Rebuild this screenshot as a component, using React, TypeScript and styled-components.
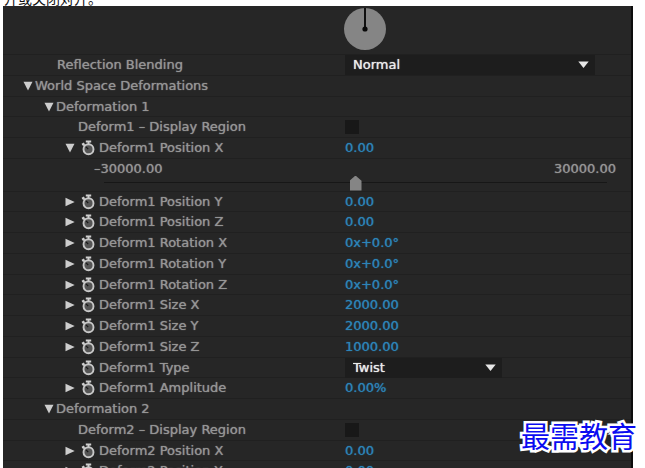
import React, { useState } from "react";
import styled, { createGlobalStyle } from "styled-components";

const GlobalStyle = createGlobalStyle`
  * { box-sizing: border-box; }
  html, body { margin: 0; background: #fff; }
  body { height: 100vh; overflow: hidden; }
  #root { height: 100%; }
`;

const Page = styled.main`
  display: flex;
  flex-direction: column;
  position: relative;
  height: 100vh;
  overflow: hidden;
  font: 13px/20px "DejaVu Sans", "Noto Sans CJK SC", sans-serif;
`;

const Caption = styled.p`
  display: flex;
  align-items: flex-end;
  flex: none;
  height: 6px;
  margin: 0;
  padding: 0 0 1px 4px;
  color: #111;
  font: 14px/14px "Noto Sans CJK SC", sans-serif;
  white-space: nowrap;
`;

const Panel = styled.section`
  flex: 1;
  min-height: 0;
  overflow: hidden;
  margin: 0 12px 0 3px;
  border-right: 2px solid #0c0c0c;
  background: #262626;
  color: #959595;
  text-shadow: 0 0 1px currentColor;
`;

const Row = styled.div`
  display: grid;
  grid-template-columns: 342px 1fr;
  height: 21px;
  border-bottom: 1px solid #202020;
  &:nth-child(4n) { height: 20px; }
`;

const DialRow = styled(Row)`
  height: 49px;
  align-items: start;
`;

const Dial = styled.div`
  display: flex;
  margin-left: -1px;
  padding-top: 1px;
`;

const SliderRow = styled(Row)`
  display: flex;
  flex-direction: column;
  height: 33px;
  padding: 0 15px 0 91px;
`;

const Range = styled.div`
  display: flex;
  justify-content: space-between;
`;

const Name = styled.div<{ $indent: number }>`
  display: flex;
  align-items: center;
  padding-left: ${(p) => p.$indent}px;
  white-space: nowrap;
`;

const Value = styled.div`
  display: flex;
  align-items: center;
  min-width: 0;
`;

const Twirl = styled.button`
  display: flex;
  align-items: center;
  justify-content: center;
  width: 14px;
  height: 14px;
  padding: 0;
  border: 0;
  background: none;
  color: #cdcdcd;
`;

const Watch = styled(Twirl)`
  width: 16px;
  height: 16px;
  margin: 0 3px 0 3px;
`;

const Scrub = styled.button`
  padding: 0;
  border: 0;
  background: none;
  color: #2c84b8;
  font: inherit;
  text-shadow: inherit;
`;

const Check = styled.input`
  appearance: none;
  width: 14px;
  height: 14px;
  margin: 0;
  background: #181818;
  &:checked { background: #959595; }
`;

const Picker = styled.div<{ $width: number }>`
  display: flex;
  align-items: center;
  width: ${(p) => p.$width}px;
  height: 100%;
  padding-right: 6px;
  background: #1d1d1d;
  color: #e6e6e6;
`;

const Select = styled.select`
  appearance: none;
  flex: 1;
  min-width: 0;
  padding: 0 0 0 8px;
  border: 0;
  background: transparent;
  color: #ececec;
  font: inherit;
  text-shadow: 0 0 1px #ececec;
`;

const Track = styled.input`
  appearance: none;
  width: auto;
  height: 16px;
  margin: -4px 9px 0 10px;
  background: linear-gradient(#171717, #171717) 0 7px / 100% 1px no-repeat;
  &::-webkit-slider-thumb {
    appearance: none;
    width: 12px;
    height: 15px;
    background: #858585;
    clip-path: polygon(50% 0, 100% 35%, 100% 100%, 0 100%, 0 35%);
  }
`;

const Watermark = styled.div`
  position: absolute;
  right: 8px;
  bottom: 13px;
  color: #0b0bf0;
  font: 29px/40px "Noto Sans CJK SC", sans-serif;
  -webkit-text-stroke: 5px #fff;
  paint-order: stroke fill;
`;

function TwirlButton({ open, label }: { open?: boolean; label: string }) {
  const [on, setOn] = useState(!!open);
  return (
    <Twirl aria-label={label} aria-expanded={on} onClick={() => setOn(!on)}>
      <svg width="10" height="10" viewBox="0 0 10 10">
        <path d={on ? "M.5 .8h9L5 9.5z" : "M.5.8 9.7 5 .5 9.2z"} fill="currentColor" />
      </svg>
    </Twirl>
  );
}

function StopwatchButton({ label }: { label: string }) {
  return (
    <Watch aria-label={label}>
      <svg width="14" height="16" viewBox="0 0 14 16">
        <path d="M4.8 1.5h5.4M7.5 1.5v3" fill="none" stroke="#cfcfcf" strokeWidth="1.8" />
        <path d="M1 4.6 3.4 3.4M2.2 4 4 6" fill="none" stroke="#cfcfcf" strokeWidth="2" />
        <circle cx="7.5" cy="9.3" r="5" fill="#555" stroke="#c8c8c8" strokeWidth="1.9" />
        <path d="M7.2 9 5 6.8" stroke="#191919" strokeWidth="1.2" />
      </svg>
    </Watch>
  );
}

function Dropdown({ label, options, width }: { label: string; options: string[]; width: number }) {
  return (
    <Picker $width={width}>
      <Select aria-label={label}>
        {options.map((o) => <option key={o}>{o}</option>)}
      </Select>
      <svg width="11" height="8" viewBox="0 0 11 8"><path d="M.3.5h10.4L5.5 7z" fill="currentColor" /></svg>
    </Picker>
  );
}

function Group({ label, indent }: { label: string; indent: number }) {
  return (
    <Row>
      <Name $indent={indent}><TwirlButton open label={label} />{label}</Name>
    </Row>
  );
}

function CheckRow({ label, id }: { label: string; id: string }) {
  return (
    <Row>
      <Name $indent={75} as="label" htmlFor={id}>{label}</Name>
      <Value><Check type="checkbox" id={id} /></Value>
    </Row>
  );
}

function Param({ label, value, open }: { label: string; value: string; open?: boolean }) {
  return (
    <Row>
      <Name $indent={60}>
        <TwirlButton open={open} label={`Expand ${label}`} />
        <StopwatchButton label={`Animate ${label}`} />
        {label}
      </Name>
      <Value><Scrub aria-label={`${label} value`}>{value}</Scrub></Value>
    </Row>
  );
}

const params = [
  ["Deform1 Position Y", "0.00"],
  ["Deform1 Position Z", "0.00"],
  ["Deform1 Rotation X", "0x+0.0°"],
  ["Deform1 Rotation Y", "0x+0.0°"],
  ["Deform1 Rotation Z", "0x+0.0°"],
  ["Deform1 Size X", "2000.00"],
  ["Deform1 Size Y", "2000.00"],
  ["Deform1 Size Z", "1000.00"],
];

export default function App() {
  return (
    <Page>
      <GlobalStyle />
      <Caption>开或关闭对开。</Caption>
      <Panel>
        <DialRow>
          <span />
          <Dial>
            <svg width="42" height="44" viewBox="0 0 42 44" role="img" aria-label="Angle">
              <circle cx="21" cy="22" r="21" fill="#858585" />
              <path d="M21 1v21" stroke="#101010" strokeWidth="2" />
              <circle cx="21" cy="22" r="2.6" fill="#080808" />
            </svg>
          </Dial>
        </DialRow>
        <Row>
          <Name $indent={54}>Reflection Blending</Name>
          <Value><Dropdown label="Reflection Blending" options={["Normal", "Add", "Multiply", "Screen"]} width={250} /></Value>
        </Row>
        <Group label="World Space Deformations" indent={18} />
        <Group label="Deformation 1" indent={39} />
        <CheckRow label="Deform1 – Display Region" id="region1" />
        <Param label="Deform1 Position X" value="0.00" open />
        <SliderRow>
          <Range><span>–30000.00</span><span>30000.00</span></Range>
          <Track type="range" min={-30000} max={30000} defaultValue={0} aria-label="Deform1 Position X" />
        </SliderRow>
        {params.map(([label, value]) => <Param key={label} label={label} value={value} />)}
        <Row>
          <Name $indent={74}><StopwatchButton label="Animate Deform1 Type" />Deform1 Type</Name>
          <Value><Dropdown label="Deform1 Type" options={["Twist", "Bend", "Taper"]} width={157} /></Value>
        </Row>
        <Param label="Deform1 Amplitude" value="0.00%" />
        <Group label="Deformation 2" indent={39} />
        <CheckRow label="Deform2 – Display Region" id="region2" />
        <Param label="Deform2 Position X" value="0.00" />
        <Param label="Deform2 Position Y" value="0.00" />
      </Panel>
      <Watermark>最需教育</Watermark>
    </Page>
  );
}
